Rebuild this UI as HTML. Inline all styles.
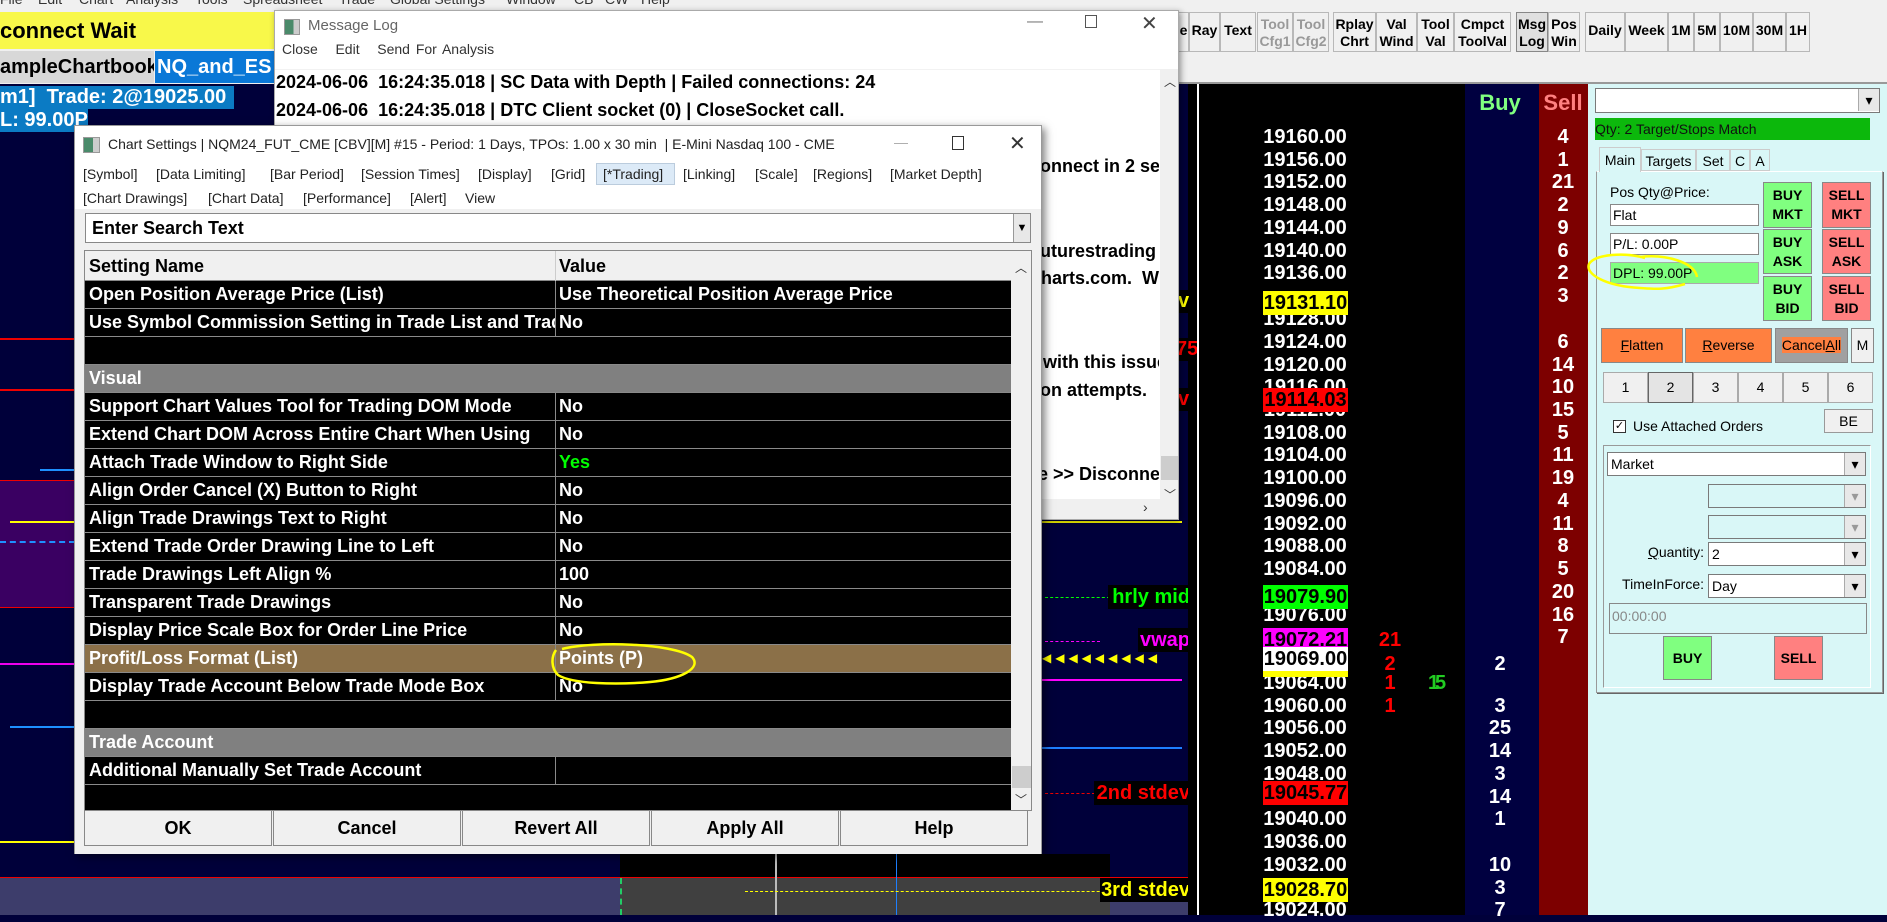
<!DOCTYPE html>
<html><head><meta charset="utf-8"><style>
*{margin:0;padding:0;box-sizing:border-box}
body{width:1887px;height:915px;overflow:hidden;position:relative;background:#00003a;font-family:"Liberation Sans",Arial,sans-serif}
.a{position:absolute}
.b{font-weight:bold}
.row{position:absolute;left:0;width:926px;height:28px;border-bottom:1px solid #8a8a8a;color:#fff;font-weight:bold;font-size:18px;line-height:27px;background:#000}
.row .n{position:absolute;left:4px;width:466px;overflow:hidden;white-space:nowrap}
.row .v{position:absolute;left:470px;top:0;height:27px;border-left:1px solid #8a8a8a;padding-left:3px;width:456px;white-space:nowrap}
.g{background:#808080}
.p{position:absolute;left:1248px;width:114px;text-align:center;color:#fff;font-weight:bold;font-size:20px;line-height:24px}
.lb{position:absolute;left:1263px;width:85px;text-align:center;font-weight:bold;font-size:20px;line-height:24px;height:24px;color:#000}
.s{position:absolute;left:1541px;width:44px;text-align:center;color:#fff;font-weight:bold;font-size:20px;line-height:24px}
.by{position:absolute;left:1470px;width:60px;text-align:center;color:#fff;font-weight:bold;font-size:20px;line-height:24px}
.rd{position:absolute;left:1370px;width:40px;text-align:center;color:#f00;font-weight:bold;font-size:20px;line-height:24px}
.tb{position:absolute;top:12px;height:40px;border:1px solid #b8b8b8;background:#f0f0f0;font-size:14px;font-weight:bold;text-align:center;line-height:17px;padding-top:3px;color:#000}
.tb1{line-height:34px;padding-top:0}
.btn{position:absolute;border:1px solid #888;font-weight:bold;font-size:14px;text-align:center;color:#000;line-height:19px}
.cb{position:absolute;height:24px;background:#fff;border:1px solid #7a7a7a;font-size:14px;line-height:22px;padding-left:3px}
.cb:after{content:"\25BE";position:absolute;right:0;top:0;width:20px;height:22px;background:#e8e8e8;border-left:1px solid #aaa;text-align:center;font-size:14px;line-height:22px;color:#000}
.cd{background:#d9f7f7}
.cd:after{color:#999}
.nb{position:absolute;top:372px;height:31px;width:45px;background:#f0f0f0;border:1px solid #aaa;text-align:center;font-size:14px;line-height:29px}
.ml{position:absolute;left:276px;font-size:18px;font-weight:bold;white-space:nowrap;color:#000}
.cl{position:absolute;font-weight:bold;font-size:20px;line-height:24px;height:24px;background:#000;text-align:right;white-space:nowrap}
</style></head><body>

<!-- top menu -->
<div class="a" style="left:0;top:0;width:1887px;height:84px;background:#f0f0f0"></div>
<div class="a" style="left:0;top:-9px;font-size:14px;color:#333;white-space:nowrap">
<span class="a" style="left:0">File</span><span class="a" style="left:38px">Edit</span><span class="a" style="left:79px">Chart</span><span class="a" style="left:126px">Analysis</span><span class="a" style="left:195px">Tools</span><span class="a" style="left:243px">Spreadsheet</span><span class="a" style="left:339px">Trade</span><span class="a" style="left:390px">Global Settings</span><span class="a" style="left:506px">Window</span><span class="a" style="left:574px">CB</span><span class="a" style="left:605px">CW</span><span class="a" style="left:641px">Help</span></div>
<div class="a b" style="left:0;top:12px;width:274px;height:37px;background:#f8f84a;font-size:22px;line-height:37px">connect Wait</div>
<div class="a b" style="left:0;top:51px;width:154px;height:32px;background:#d8d8d8;font-size:20px;line-height:32px;white-space:nowrap;overflow:hidden">ampleChartbook</div>
<div class="a b" style="left:155px;top:51px;width:119px;height:32px;background:#0a78d7;color:#fff;font-size:20px;line-height:32px;padding-left:2px">NQ_and_ES</div>

<!-- left chart -->
<div class="a" style="left:0;top:84px;width:1188px;height:831px;background:#00003a"></div>
<div class="a" style="left:0;top:481px;width:75px;height:127px;background:#3a0062"></div>
<div class="a" style="left:0;top:338px;width:75px;height:2px;background:#e00"></div>
<div class="a" style="left:0;top:389px;width:75px;height:2px;background:#e00"></div>
<div class="a" style="left:0;top:480px;width:75px;height:1px;background:#e00"></div>
<div class="a" style="left:0;top:607px;width:75px;height:1px;background:#e00"></div>
<div class="a" style="left:10px;top:521px;width:65px;height:2px;background:#ff0"></div>
<div class="a" style="left:0;top:541px;width:75px;height:0;border-top:2px dashed #1e90ff"></div>
<div class="a" style="left:40px;top:469px;width:35px;height:2px;background:#1e90ff"></div>
<div class="a" style="left:0;top:663px;width:75px;height:2px;background:#e0e"></div>
<div class="a" style="left:10px;top:726px;width:65px;height:2px;background:#1e90ff"></div>
<div class="a" style="left:0;top:841px;width:75px;height:2px;background:#ff0"></div>
<div class="a" style="left:0;top:878px;width:1188px;height:37px;background:#3d3d6b"></div>
<div class="a" style="left:620px;top:854px;width:490px;height:24px;background:#000"></div>
<div class="a" style="left:620px;top:878px;width:490px;height:37px;background:#404040"></div>
<div class="a" style="left:0;top:877px;width:1197px;height:1px;background:#e00"></div>
<div class="a" style="left:775px;top:854px;width:2px;height:61px;background:#bbb"></div>
<div class="a" style="left:896px;top:854px;width:1px;height:61px;background:#1e7fff"></div>
<div class="a" style="left:620px;top:878px;width:0;height:37px;border-left:2px dashed #2c6"></div>
<div class="a" style="left:745px;top:891px;width:430px;height:0;border-top:1px dashed #ff0"></div>
<div class="cl" style="left:1100px;top:878px;width:90px;color:#ff0">3rd stdev</div>
<div class="a b" style="left:0;top:86px;width:234px;height:23px;background:#0b7bc4;color:#fff;font-size:20px;line-height:23px;white-space:nowrap">m1]&nbsp; Trade: 2@19025.00</div>
<div class="a b" style="left:0;top:109px;width:88px;height:23px;background:#0b7bc4;color:#fff;font-size:20px;line-height:23px;white-space:nowrap;overflow:hidden">L: 99.00P</div>

<!-- chart strip right of dialogs -->
<div class="a" style="left:1042px;top:521px;width:140px;height:2px;background:#ff0"></div>
<div class="a" style="left:1045px;top:597px;width:65px;height:0;border-top:1px dashed #0f0"></div>
<div class="cl" style="left:1108px;top:585px;width:82px;color:#0f0">hrly mid</div>
<div class="a" style="left:1045px;top:641px;width:55px;height:0;border-top:1px dashed #f0f"></div>
<div class="cl" style="left:1138px;top:628px;width:52px;color:#f0f">vwap</div>
<div class="a" style="left:1042px;top:651px;color:#ff0;font-size:12px;letter-spacing:4px;white-space:nowrap">◀◀◀◀◀◀◀◀◀</div>
<div class="a" style="left:1042px;top:679px;width:140px;height:2px;background:#f0f"></div>
<div class="a" style="left:1042px;top:747px;width:140px;height:2px;background:#1e7fff"></div>
<div class="a" style="left:1045px;top:793px;width:50px;height:0;border-top:1px dashed #e00"></div>
<div class="cl" style="left:1094px;top:781px;width:96px;color:#f00">2nd stdev</div>
<div class="a" style="left:1188px;top:84px;width:9px;height:831px;background:#000"></div>
<div class="a b" style="left:1178px;top:290px;color:#ff0;font-size:20px;background:#000">v</div>
<div class="a" style="left:1179px;top:338px;width:18px;height:2px;background:#e00"></div>
<div class="a b" style="left:1176px;top:338px;color:#f00;font-size:20px;background:#000">75</div>
<div class="a b" style="left:1178px;top:388px;color:#f00;font-size:20px;background:#000">v</div>

<!-- DOM -->
<div class="a" style="left:1197px;top:84px;width:2px;height:831px;background:#fff"></div>
<div class="a" style="left:1199px;top:84px;width:266px;height:831px;background:#000"></div>
<div class="a" style="left:1465px;top:84px;width:74px;height:831px;background:#000040"></div>
<div class="a" style="left:1539px;top:84px;width:49px;height:831px;background:#7d0000"></div>
<div class="a" style="left:1179px;top:82px;width:708px;height:2px;background:#999"></div>
<div class="a b" style="left:1470px;top:90px;width:60px;text-align:center;color:#80ff80;font-size:22px">Buy</div>
<div class="a b" style="left:1540px;top:90px;width:46px;text-align:center;color:#ff8080;font-size:22px">Sell</div>

<div class="p" style="top:125px">19160.00</div><div class="p" style="top:148px">19156.00</div><div class="p" style="top:170px">19152.00</div><div class="p" style="top:193px">19148.00</div><div class="p" style="top:216px">19144.00</div><div class="p" style="top:239px">19140.00</div><div class="p" style="top:261px">19136.00</div><div class="p" style="top:307px">19128.00</div><div class="p" style="top:330px">19124.00</div><div class="p" style="top:353px">19120.00</div><div class="p" style="top:375px">19116.00</div><div class="p" style="top:398px">19112.00</div><div class="p" style="top:421px">19108.00</div><div class="p" style="top:443px">19104.00</div><div class="p" style="top:466px">19100.00</div><div class="p" style="top:489px">19096.00</div><div class="p" style="top:512px">19092.00</div><div class="p" style="top:534px">19088.00</div><div class="p" style="top:557px">19084.00</div><div class="p" style="top:603px">19076.00</div><div class="p" style="top:671px">19064.00</div><div class="p" style="top:694px">19060.00</div><div class="p" style="top:716px">19056.00</div><div class="p" style="top:739px">19052.00</div><div class="p" style="top:762px">19048.00</div><div class="p" style="top:807px">19040.00</div><div class="p" style="top:830px">19036.00</div><div class="p" style="top:853px">19032.00</div><div class="p" style="top:898px">19024.00</div>
<div class="lb" style="top:291px;background:#ff0">19131.10</div>
<div class="lb" style="top:388px;background:#f00">19114.03</div>
<div class="lb" style="top:585px;background:#0f0">19079.90</div>
<div class="lb" style="top:628px;background:#f0f">19072.21</div>
<div class="lb" style="top:665px;height:12px;background:#ff0"></div>
<div class="lb" style="top:647px;background:#fff">19069.00</div>
<div class="lb" style="top:781px;background:#f00">19045.77</div>
<div class="lb" style="top:878px;background:#ff0">19028.70</div>

<div class="s" style="top:125px">4</div><div class="s" style="top:148px">1</div><div class="s" style="top:170px">21</div><div class="s" style="top:193px">2</div><div class="s" style="top:216px">9</div><div class="s" style="top:239px">6</div><div class="s" style="top:261px">2</div><div class="s" style="top:284px">3</div><div class="s" style="top:330px">6</div><div class="s" style="top:353px">14</div><div class="s" style="top:375px">10</div><div class="s" style="top:398px">15</div><div class="s" style="top:421px">5</div><div class="s" style="top:443px">11</div><div class="s" style="top:466px">19</div><div class="s" style="top:489px">4</div><div class="s" style="top:512px">11</div><div class="s" style="top:534px">8</div><div class="s" style="top:557px">5</div><div class="s" style="top:580px">20</div><div class="s" style="top:603px">16</div><div class="s" style="top:625px">7</div>
<div class="by" style="top:652px">2</div><div class="by" style="top:694px">3</div><div class="by" style="top:716px">25</div><div class="by" style="top:739px">14</div><div class="by" style="top:762px">3</div><div class="by" style="top:785px">14</div><div class="by" style="top:807px">1</div><div class="by" style="top:853px">10</div><div class="by" style="top:876px">3</div><div class="by" style="top:898px">7</div>
<div class="rd" style="top:628px">21</div><div class="rd" style="top:652px">2</div><div class="rd" style="top:671px">1</div><div class="rd" style="top:694px">1</div>
<div class="a b" style="left:1428px;top:671px;color:#2c2;font-size:20px;line-height:24px">1</div>
<div class="a b" style="left:1435px;top:671px;color:#2c2;font-size:20px;line-height:24px">5</div>

<!-- toolbar -->
<div class="tb tb1" style="left:1179px;width:10px;border-left:0">e</div>
<div class="tb tb1" style="left:1189px;width:31px">Ray</div>
<div class="tb tb1" style="left:1220px;width:36px">Text</div>
<div class="tb" style="left:1257px;width:36px;color:#999">Tool<br>Cfg1</div>
<div class="tb" style="left:1293px;width:36px;color:#999">Tool<br>Cfg2</div>
<div class="tb" style="left:1333px;width:43px">Rplay<br>Chrt</div>
<div class="tb" style="left:1376px;width:41px">Val<br>Wind</div>
<div class="tb" style="left:1417px;width:37px">Tool<br>Val</div>
<div class="tb" style="left:1454px;width:57px">Cmpct<br>ToolVal</div>
<div class="tb" style="left:1516px;width:32px;background:#e0e0e0;border-color:#888">Msg<br>Log</div>
<div class="tb" style="left:1548px;width:32px">Pos<br>Win</div>
<div class="tb tb1" style="left:1585px;width:40px">Daily</div>
<div class="tb tb1" style="left:1625px;width:43px">Week</div>
<div class="tb tb1" style="left:1668px;width:26px">1M</div>
<div class="tb tb1" style="left:1694px;width:26px">5M</div>
<div class="tb tb1" style="left:1720px;width:33px">10M</div>
<div class="tb tb1" style="left:1753px;width:33px">30M</div>
<div class="tb tb1" style="left:1786px;width:24px">1H</div>

<!-- right panel -->
<div class="a" style="left:1588px;top:84px;width:299px;height:831px;background:#d9f7f7"></div>
<div class="cb" style="left:1595px;top:88px;width:285px;height:25px"></div>
<div class="a" style="left:1595px;top:118px;width:275px;height:22px;background:#0cb80c;font-size:14px;line-height:22px;color:#111">Qty: 2 Target/Stops Match</div>
<div class="a" style="left:1596px;top:171px;width:287px;height:522px;border:1px solid #999;border-top-color:#fff;background:#d9f7f7;box-shadow:1px 1px 0 #666"></div>
<div class="a" style="left:1599px;top:147px;width:42px;height:25px;background:#d9f7f7;border:1px solid #ccc;border-bottom:0;font-size:14px;line-height:24px;text-align:center">Main</div>
<div class="a" style="left:1641px;top:149px;width:55px;height:22px;border:1px solid #ccc;font-size:14px;line-height:22px;text-align:center">Targets</div>
<div class="a" style="left:1696px;top:149px;width:34px;height:22px;border:1px solid #ccc;font-size:14px;line-height:22px;text-align:center">Set</div>
<div class="a" style="left:1730px;top:149px;width:20px;height:22px;border:1px solid #ccc;font-size:14px;line-height:22px;text-align:center">C</div>
<div class="a" style="left:1750px;top:149px;width:20px;height:22px;border:1px solid #ccc;font-size:14px;line-height:22px;text-align:center">A</div>
<div class="a" style="left:1610px;top:184px;font-size:14px">Pos Qty@Price:</div>
<div class="a" style="left:1610px;top:204px;width:149px;height:22px;background:#fff;border:1px solid #888;font-size:14px;line-height:20px;padding-left:2px">Flat</div>
<div class="a" style="left:1610px;top:233px;width:149px;height:22px;background:#fff;border:1px solid #888;font-size:14px;line-height:20px;padding-left:2px">P/L: 0.00P</div>
<div class="a" style="left:1610px;top:262px;width:149px;height:22px;background:#80ff80;border:1px solid #aaa;font-size:14px;line-height:20px;padding-left:2px">DPL: 99.00P</div>
<svg class="a" style="left:1585px;top:252px" width="115" height="44"><path d="M60 6 C 40 0, 10 2, 4 12 C 0 22, 20 34, 55 36 C 70 37, 80 38, 100 32 M 112 25 C 110 10, 80 2, 55 5" fill="none" stroke="#ff0" stroke-width="2.5"/></svg>
<div class="btn" style="left:1763px;top:182px;width:49px;height:46px;background:#80ff80;padding-top:3px">BUY<br>MKT</div>
<div class="btn" style="left:1822px;top:182px;width:49px;height:46px;background:#ff8080;padding-top:3px">SELL<br>MKT</div>
<div class="btn" style="left:1763px;top:229px;width:49px;height:45px;background:#80ff80;padding-top:3px">BUY<br>ASK</div>
<div class="btn" style="left:1822px;top:229px;width:49px;height:45px;background:#ff8080;padding-top:3px">SELL<br>ASK</div>
<div class="btn" style="left:1763px;top:276px;width:49px;height:45px;background:#80ff80;padding-top:3px">BUY<br>BID</div>
<div class="btn" style="left:1822px;top:276px;width:49px;height:45px;background:#ff8080;padding-top:3px">SELL<br>BID</div>
<div class="btn" style="left:1601px;top:328px;width:82px;height:35px;background:#ff8040;font-weight:normal;line-height:33px"><u>F</u>latten</div>
<div class="btn" style="left:1685px;top:328px;width:87px;height:35px;background:#ff8040;font-weight:normal;line-height:33px"><u>R</u>everse</div>
<div class="btn" style="left:1775px;top:328px;width:73px;height:35px;background:#a0a0a0;font-weight:normal;line-height:33px"><span style="background:#ff8040">Cancel<u>A</u>ll</span></div>
<div class="btn" style="left:1851px;top:328px;width:23px;height:35px;background:#f0f0f0;font-weight:normal;line-height:33px">M</div>
<div class="nb" style="left:1603px">1</div><div class="nb" style="left:1648px;background:#e4e4e4;border-color:#666">2</div><div class="nb" style="left:1693px">3</div><div class="nb" style="left:1738px">4</div><div class="nb" style="left:1783px">5</div><div class="nb" style="left:1828px">6</div>
<div class="a" style="left:1613px;top:420px;width:13px;height:13px;background:#fff;border:1px solid #333;font-size:11px;line-height:11px;text-align:center">✓</div>
<div class="a" style="left:1633px;top:418px;font-size:14px">Use Attached Orders</div>
<div class="a" style="left:1824px;top:409px;width:49px;height:24px;background:#f0f0f0;border:1px solid #999;font-size:14px;text-align:center;line-height:22px">BE</div>
<div class="a" style="left:1603px;top:445px;width:268px;height:243px;border:1px solid #999;border-right-color:#fff;border-bottom-color:#fff"></div>
<div class="cb" style="left:1607px;top:452px;width:259px">Market</div>
<div class="cb cd" style="left:1708px;top:484px;width:158px"></div>
<div class="cb cd" style="left:1708px;top:515px;width:158px"></div>
<div class="a" style="left:1610px;top:544px;width:94px;text-align:right;font-size:14px"><u>Q</u>uantity:</div>
<div class="cb" style="left:1708px;top:542px;width:158px">2</div>
<div class="a" style="left:1610px;top:576px;width:94px;text-align:right;font-size:14px">TimeInForce:</div>
<div class="cb" style="left:1708px;top:574px;width:158px">Day</div>
<div class="a" style="left:1609px;top:603px;width:258px;height:31px;border:1px solid #888;font-size:14px;color:#888;padding:4px 2px">00:00:00</div>
<div class="btn" style="left:1663px;top:636px;width:49px;height:44px;background:#80ff80;line-height:42px">BUY</div>
<div class="btn" style="left:1774px;top:636px;width:49px;height:44px;background:#ff8080;line-height:42px">SELL</div>

<!-- message log window -->
<div class="a" style="left:274px;top:10px;width:905px;height:510px;background:#fff;border:1px solid #aaa;box-shadow:2px 2px 6px rgba(0,0,0,.4);overflow:hidden">
 <div class="a" style="left:9px;top:8px;width:16px;height:16px;background:linear-gradient(90deg,#4a8a6a 60%,#ccc 60%);border:1px solid #999"></div>
 <div class="a" style="left:33px;top:6px;font-size:15px;color:#666">Message Log</div>
 <div class="a" style="left:752px;top:2px;font-size:16px;color:#777">—</div>
 <div class="a" style="left:810px;top:4px;width:12px;height:13px;border:1px solid #555"></div>
 <div class="a" style="left:866px;top:0;font-size:20px;color:#444">✕</div>
 <div class="a" style="left:7px;top:30px;font-size:14px;color:#333;word-spacing:2px">Close&nbsp;&nbsp;&nbsp;Edit&nbsp;&nbsp;&nbsp;Send For Analysis</div>
 <div class="a" style="left:0;top:58px;width:905px;height:1px;background:#f2f2f2"></div>
 <div class="a" style="left:885px;top:58px;width:20px;height:440px;background:#f0f0f0"></div>
 <div class="a" style="left:889px;top:62px;font-size:12px;color:#333">︿</div>
 <div class="a" style="left:886px;top:445px;width:18px;height:24px;background:#cdcdcd"></div>
 <div class="a" style="left:889px;top:475px;font-size:12px;color:#333">﹀</div>
 <div class="a" style="left:0;top:488px;width:905px;height:22px;background:#f0f0f0"></div>
 <div class="a" style="left:868px;top:488px;font-size:14px;color:#333">›</div>
</div>
<div class="ml" style="top:72px">2024-06-06&nbsp; 16:24:35.018 | SC Data with Depth | Failed connections: 24</div>
<div class="ml" style="top:100px">2024-06-06&nbsp; 16:24:35.018 | DTC Client socket (0) | CloseSocket call.</div>
<div class="a" style="left:1042px;top:130px;width:117px;height:380px;overflow:hidden">
 <div class="ml" style="left:-2px;top:26px">onnect in 2 seconds.</div>
 <div class="ml" style="left:-2px;top:111px">uturestrading</div>
 <div class="ml" style="left:-1px;top:138px">harts.com.&nbsp; W</div>
 <div class="ml" style="left:1px;top:222px">with this issue</div>
 <div class="ml" style="left:-2px;top:250px">on attempts.</div>
 <div class="ml" style="left:-4px;top:334px">e &gt;&gt; Disconnect</div>
</div>

<!-- chart settings dialog -->
<div class="a" style="left:74px;top:125px;width:968px;height:729px;background:#fff;border:1px solid #999;box-shadow:3px 3px 8px rgba(0,0,0,.5)">
 <div class="a" style="left:8px;top:11px;width:17px;height:16px;background:linear-gradient(90deg,#4a8a6a 60%,#ccc 60%);border:1px solid #999"></div>
 <div class="a" style="left:33px;top:10px;font-size:14px;color:#222;white-space:nowrap">Chart Settings | NQM24_FUT_CME [CBV][M] #15 - Period: 1 Days, TPOs: 1.00 x 30 min &nbsp;| E-Mini Nasdaq 100 - CME</div>
 <div class="a" style="left:819px;top:8px;font-size:14px;color:#aaa">—</div>
 <div class="a" style="left:877px;top:10px;width:12px;height:14px;border:1px solid #333"></div>
 <div class="a" style="left:934px;top:5px;font-size:20px;color:#333">✕</div>
 <div class="a" style="left:0;top:40px;font-size:14px;color:#222;white-space:nowrap">
  <span class="a" style="left:8px">[Symbol]</span><span class="a" style="left:81px">[Data Limiting]</span><span class="a" style="left:195px">[Bar Period]</span><span class="a" style="left:286px">[Session Times]</span><span class="a" style="left:403px">[Display]</span><span class="a" style="left:476px">[Grid]</span><span class="a" style="left:521px;top:-3px;width:79px;height:22px;background:#dceaf7;border:1px solid #bcd"></span><span class="a" style="left:528px">[*Trading]</span><span class="a" style="left:608px">[Linking]</span><span class="a" style="left:680px">[Scale]</span><span class="a" style="left:738px">[Regions]</span><span class="a" style="left:815px">[Market Depth]</span>
  <span class="a" style="left:8px;top:24px">[Chart Drawings]</span><span class="a" style="left:133px;top:24px">[Chart Data]</span><span class="a" style="left:228px;top:24px">[Performance]</span><span class="a" style="left:335px;top:24px">[Alert]</span><span class="a" style="left:390px;top:24px">View</span>
 </div>
 <div class="a" style="left:0;top:83px;width:966px;height:645px;background:#f0f0f0"></div>
 <div class="a b" style="left:10px;top:87px;width:946px;height:30px;background:#fff;border:1px solid #888;font-size:18px;line-height:28px;padding-left:6px">Enter Search Text
  <div class="a" style="right:0;top:0;width:17px;height:28px;background:#e8e8e8;border-left:1px solid #999;font-size:11px;text-align:center;line-height:28px">▼</div></div>
 <div class="a" style="left:9px;top:124px;width:948px;height:561px;background:#000;border:1px solid #888;overflow:hidden">
  <div class="a b" style="left:0;top:0;width:926px;height:30px;background:#f0f0f0;font-size:18px;line-height:30px;border-bottom:1px solid #888"><span class="a" style="left:4px">Setting Name</span><span class="a" style="left:470px;top:0;height:30px;border-left:1px solid #ccc;padding-left:3px">Value</span></div>
  <div style="position:absolute;left:0;top:30px">
   <div class="row" style="top:0"><span class="n">Open Position Average Price (List)</span><span class="v">Use Theoretical Position Average Price</span></div>
   <div class="row" style="top:28px"><span class="n">Use Symbol Commission Setting in Trade List and Trade</span><span class="v">No</span></div>
   <div class="row" style="top:56px"></div>
   <div class="row g" style="top:84px"><span class="n">Visual</span></div>
   <div class="row" style="top:112px"><span class="n">Support Chart Values Tool for Trading DOM Mode</span><span class="v">No</span></div>
   <div class="row" style="top:140px"><span class="n">Extend Chart DOM Across Entire Chart When Using</span><span class="v">No</span></div>
   <div class="row" style="top:168px"><span class="n">Attach Trade Window to Right Side</span><span class="v" style="color:#0f0">Yes</span></div>
   <div class="row" style="top:196px"><span class="n">Align Order Cancel (X) Button to Right</span><span class="v">No</span></div>
   <div class="row" style="top:224px"><span class="n">Align Trade Drawings Text to Right</span><span class="v">No</span></div>
   <div class="row" style="top:252px"><span class="n">Extend Trade Order Drawing Line to Left</span><span class="v">No</span></div>
   <div class="row" style="top:280px"><span class="n">Trade Drawings Left Align %</span><span class="v">100</span></div>
   <div class="row" style="top:308px"><span class="n">Transparent Trade Drawings</span><span class="v">No</span></div>
   <div class="row" style="top:336px"><span class="n">Display Price Scale Box for Order Line Price</span><span class="v">No</span></div>
   <div class="row" style="top:364px;background:#8b7048"><span class="n">Profit/Loss Format (List)</span><span class="v">Points (P)</span></div>
   <div class="row" style="top:392px"><span class="n">Display Trade Account Below Trade Mode Box</span><span class="v">No</span></div>
   <div class="row" style="top:420px"></div>
   <div class="row g" style="top:448px"><span class="n">Trade Account</span></div>
   <div class="row" style="top:476px"><span class="n">Additional Manually Set Trade Account</span><span class="v"></span></div>
  </div>
  <div class="a" style="left:926px;top:0;width:21px;height:561px;background:#f0f0f0"></div>
  <div class="a" style="left:930px;top:8px;font-size:12px;color:#333">︿</div>
  <div class="a" style="left:927px;top:515px;width:19px;height:22px;background:#cdcdcd"></div>
  <div class="a" style="left:930px;top:540px;font-size:12px;color:#333">﹀</div>
 </div>
 <div class="a b" style="left:9px;top:684px;width:946px;height:36px;font-size:18px">
  <div class="a" style="left:0;width:188px;height:36px;border:1px solid #888;background:#f0f0f0;text-align:center;line-height:34px">OK</div>
  <div class="a" style="left:189px;width:188px;height:36px;border:1px solid #888;background:#f0f0f0;text-align:center;line-height:34px">Cancel</div>
  <div class="a" style="left:378px;width:188px;height:36px;border:1px solid #888;background:#f0f0f0;text-align:center;line-height:34px">Revert All</div>
  <div class="a" style="left:567px;width:188px;height:36px;border:1px solid #888;background:#f0f0f0;text-align:center;line-height:34px">Apply All</div>
  <div class="a" style="left:756px;width:188px;height:36px;border:1px solid #888;background:#f0f0f0;text-align:center;line-height:34px">Help</div>
 </div>
</div>
<svg class="a" style="left:548px;top:642px" width="160" height="46"><path d="M14 7 C 45 -1, 125 1, 144 15 C 154 26, 134 37, 102 40 C 68 43, 24 42, 10 33 C 3 26, 3 15, 8 8" fill="none" stroke="#ff0" stroke-width="2.5"/></svg>
</body></html>
